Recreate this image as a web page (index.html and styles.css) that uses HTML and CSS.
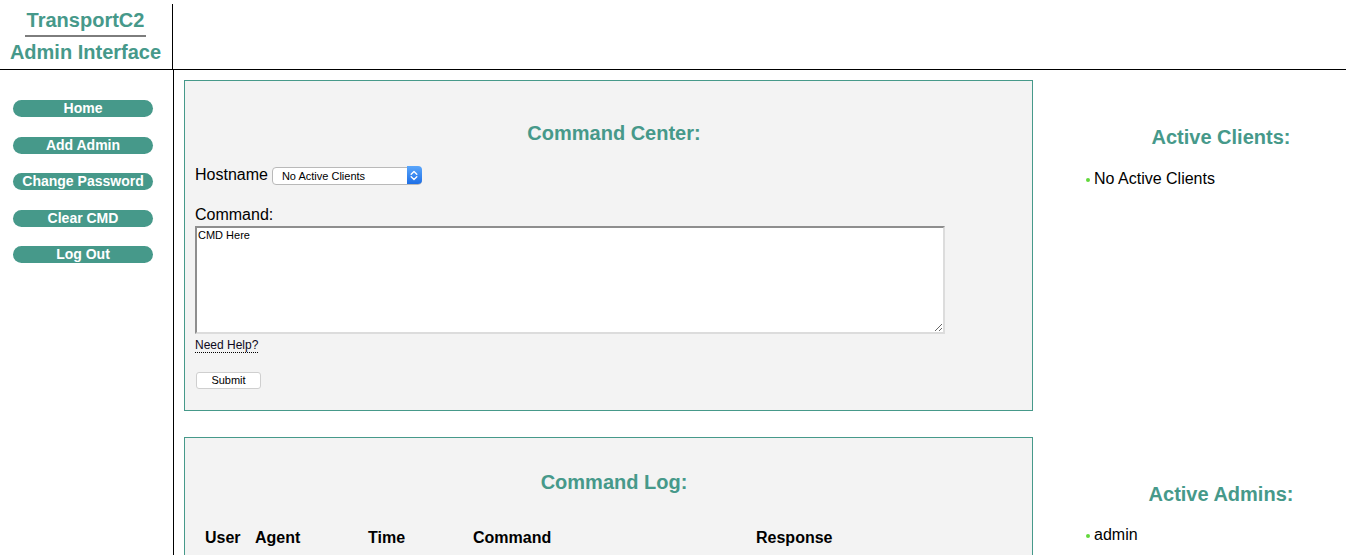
FILE: index.html
```html
<!DOCTYPE html>
<html lang="en">
<head>
<meta charset="utf-8">
<title>TransportC2 Admin Interface</title>
<link rel="stylesheet" href="styles.css">
</head>
<body>
<header class="topbar">
  <div class="brand">
    <div class="brand-title">TransportC2</div>
    <div class="brand-rule"></div>
    <div class="brand-title brand-sub">Admin Interface</div>
  </div>
</header>
<div class="layout">
  <nav class="sidebar">
    <a class="nav-btn">Home</a>
    <a class="nav-btn">Add Admin</a>
    <a class="nav-btn">Change Password</a>
    <a class="nav-btn">Clear CMD</a>
    <a class="nav-btn">Log Out</a>
  </nav>
  <main class="main">
    <section class="panel panel-cmd">
      <h2 class="panel-title">Command Center:</h2>
      <div class="host-row">
        <label class="field-label">Hostname</label>
        <span class="select-wrap">
          <select class="host-select"><option>No Active Clients</option></select>
          <span class="select-arrow">
            <svg width="8" height="11" viewBox="0 0 8 11"><path d="M1.2 4.2 L4 1.6 L6.8 4.2 M1.2 6.8 L4 9.4 L6.8 6.8" fill="none" stroke="#fff" stroke-width="1.4" stroke-linecap="round" stroke-linejoin="round"/></svg>
          </span>
        </span>
      </div>
      <div class="field-label cmd-label">Command:</div>
      <textarea class="cmd-input">CMD Here</textarea>
      <div class="help-row"><span class="help">Need Help?</span></div>
      <button class="submit-btn">Submit</button>
    </section>
    <section class="panel panel-log">
      <h2 class="panel-title log-title">Command Log:</h2>
      <table class="log-table">
        <thead>
          <tr>
            <th class="c-user">User</th>
            <th class="c-agent">Agent</th>
            <th class="c-time">Time</th>
            <th class="c-cmd">Command</th>
            <th class="c-resp">Response</th>
          </tr>
        </thead>
      </table>
    </section>
  </main>
  <aside class="right">
    <h2 class="side-title">Active Clients:</h2>
    <ul class="side-list"><li>No Active Clients</li></ul>
    <h2 class="side-title admins-title">Active Admins:</h2>
    <ul class="side-list"><li>admin</li></ul>
  </aside>
</div>
</body>
</html>
```
FILE: styles.css
```css
html, body {
  margin: 0;
  padding: 0;
  background: #ffffff;
  font-family: "Liberation Sans", Arial, sans-serif;
  color: #000;
}

.topbar {
  height: 65px;
  padding-top: 4px;
  border-bottom: 1px solid #000;
  box-sizing: content-box;
}

.brand {
  width: 173px;
  height: 65px;
  border-right: 1px solid #000;
  padding-top: 4.5px;
  box-sizing: border-box;
}

.brand-title {
  font-size: 20px;
  line-height: 23px;
  font-weight: bold;
  color: #46998a;
  text-align: center;
  width: 171px;
}

.brand-rule {
  width: 121px;
  height: 2px;
  background: #7d7d7d;
  margin: 3.5px 0 0 25px;
}

.brand-sub {
  margin-top: 3.5px;
}

.layout {
  display: flex;
  align-items: stretch;
  min-height: 600px;
}

.sidebar {
  width: 173px;
  flex: none;
  border-right: 1px solid #000;
  padding-top: 30px;
  display: flex;
  flex-direction: column;
  gap: 19.5px;
}

.nav-btn {
  display: block;
  width: 140px;
  height: 17px;
  margin-left: 13px;
  border-radius: 9px;
  background: #46998a;
  color: #fff;
  font-size: 14px;
  font-weight: bold;
  line-height: 17px;
  text-align: center;
}

.main {
  width: 849px;
  flex: none;
  margin-left: 10px;
  margin-right: 13px;
  padding-top: 10px;
}

.panel {
  background: #f3f3f3;
  border: 1px solid #46998a;
  box-sizing: border-box;
  padding: 0 10px;
}

.panel-cmd {
  height: 331px;
}

.panel-log {
  margin-top: 26px;
  height: 200px;
}

.panel-title {
  margin: 40px 0 0;
  padding-left: 11px;
  font-size: 20px;
  line-height: 24px;
  font-weight: bold;
  color: #46998a;
  text-align: center;
}

.log-title {
  margin-top: 31.5px;
}

.host-row {
  display: flex;
  align-items: center;
  margin-top: 21px;
  height: 18px;
}

.field-label {
  font-size: 16px;
  line-height: 18px;
}

.select-wrap {
  position: relative;
  display: inline-block;
  margin-left: 4px;
  width: 150px;
  height: 18px;
}

.host-select {
  appearance: none;
  -webkit-appearance: none;
  width: 150px;
  height: 18px;
  border: 1px solid #b9b9b9;
  border-radius: 4px;
  background: #fff;
  font-family: "Liberation Sans", Arial, sans-serif;
  font-size: 11px;
  color: #000;
  padding: 0 0 0 9px;
  margin: 0;
  box-sizing: border-box;
}

.select-arrow {
  position: absolute;
  top: 0;
  right: 0;
  width: 15px;
  height: 18px;
  border-radius: 0 4px 4px 0;
  background: linear-gradient(#5aa6fb, #1e6fe6);
  display: flex;
  align-items: center;
  justify-content: center;
  pointer-events: none;
}

.cmd-label {
  margin-top: 22px;
}

.cmd-input {
  display: block;
  margin: 2px 0 0 0;
  width: 750px;
  height: 108px;
  box-sizing: border-box;
  border-style: solid;
  border-width: 2px;
  border-color: #8e8e8e #dcdcdc #dcdcdc #8e8e8e;
  background: #fff;
  font-family: "Liberation Sans", Arial, sans-serif;
  font-size: 11px;
  line-height: 13px;
  padding: 1px 1px;
  color: #000;
}

.help-row {
  margin-top: 4px;
  font-size: 12px;
  line-height: 14px;
}

.help {
  color: #0d0820;
  border-bottom: 1px dotted #000;
}

.submit-btn {
  display: block;
  margin: 20px 0 0 1px;
  width: 65px;
  height: 17px;
  padding: 0;
  background: #fff;
  border: 1px solid #cfcfcf;
  border-radius: 3px;
  font-family: "Liberation Sans", Arial, sans-serif;
  font-size: 11px;
  line-height: 15px;
  color: #000;
}

.log-table {
  border-collapse: collapse;
  margin: 35px 0 0 10px;
}

.log-table th {
  text-align: left;
  font-size: 16px;
  line-height: 18px;
  font-weight: bold;
  padding: 0;
}

.c-user { width: 50px; }
.c-agent { width: 113px; }
.c-time { width: 105px; }
.c-cmd { width: 283px; }
.c-resp { width: 100px; }

.right {
  flex: 1;
  padding-top: 55px;
}

.side-title {
  margin: 0;
  padding-left: 50px;
  font-size: 20px;
  line-height: 24px;
  font-weight: bold;
  color: #46998a;
  text-align: center;
}

.admins-title {
  margin-top: 294px;
}

.side-list {
  list-style: none;
  margin: 21px 0 0 40px;
  padding: 0;
}

.side-list li {
  position: relative;
  padding-left: 8px;
  font-size: 16px;
  line-height: 18px;
}

.side-list li::before {
  content: "";
  position: absolute;
  left: 0;
  top: 8px;
  width: 4px;
  height: 4px;
  border-radius: 50%;
  background: #62d83c;
}

.admins-title + .side-list {
  margin-top: 20px;
}
```
